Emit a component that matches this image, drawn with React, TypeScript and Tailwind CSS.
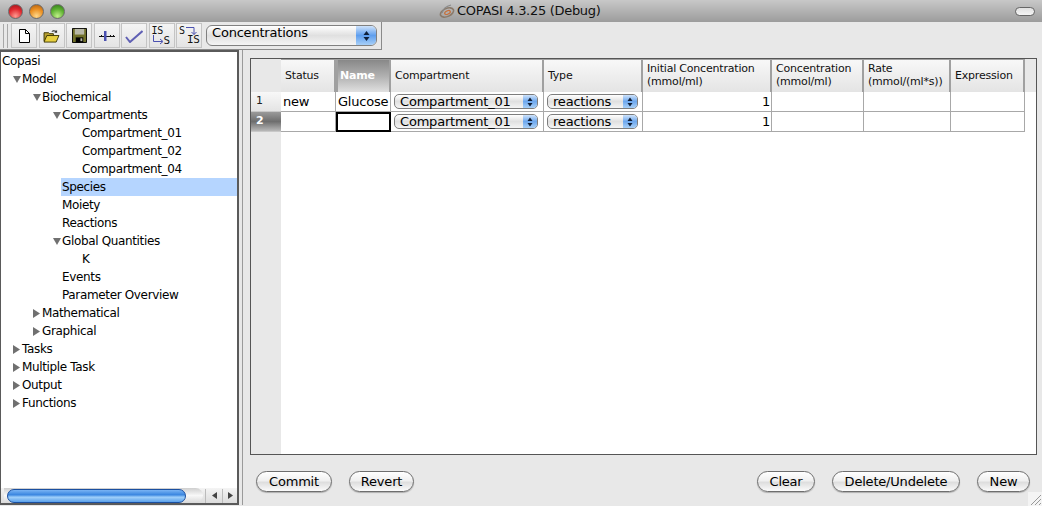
import React from "react";

function Light({ c }: { c: string }) {
  return <div className={`w-[15px] h-[15px] rounded-full border border-[#6b6b6b] ${c}`} />;
}

function ToolBtn({ children }: { children: React.ReactNode }) {
  return (
    <div className="w-[26px] h-[25px] bg-[linear-gradient(#f4f4f4,#e4e4e4)] border border-[#c4c4c4] flex items-center justify-center shrink-0">
      {children}
    </div>
  );
}

function Combo({ text, className }: { text: string; className: string }) {
  return (
    <div className={`h-[15px] rounded-[5px] border border-[#7d7d7d] bg-[linear-gradient(#ffffff,#e0e0e0_50%,#f4f4f4)] flex items-center ${className}`}>
      <span className="flex-1 pl-[5px] text-[13px] leading-[13px] pb-[1px] text-black whitespace-nowrap">{text}</span>
      <div className="w-[14px] h-full rounded-r-[4px] bg-[linear-gradient(#cfe3fb,#6ea8ee_50%,#a8d0f8)] flex items-center justify-center">
        <svg width="6" height="10" viewBox="0 0 6 10"><path d="M3 .5 5.500 4H.5zM3 9.500 .5 6h5z" fill="#10203a" /></svg>
      </div>
    </div>
  );
}

function Pill({ text, className }: { text: string; className: string }) {
  return (
    <div className={`h-[21px] rounded-full border border-[#6e6e6e] bg-[linear-gradient(#ffffff,#f0f0f0_45%,#dedede_55%,#fbfbfb)] shadow-[0_1px_1px_rgba(0,0,0,0.25)] flex items-center justify-center text-[13px] text-black ${className}`}>
      {text}
    </div>
  );
}

const tree: { label: string; indent: number; arrow?: "down" | "right"; selected?: boolean }[] = [
  { label: "Copasi", indent: 2 },
  { label: "Model", indent: 22, arrow: "down" },
  { label: "Biochemical", indent: 42, arrow: "down" },
  { label: "Compartments", indent: 62, arrow: "down" },
  { label: "Compartment_01", indent: 82 },
  { label: "Compartment_02", indent: 82 },
  { label: "Compartment_04", indent: 82 },
  { label: "Species", indent: 62, selected: true },
  { label: "Moiety", indent: 62 },
  { label: "Reactions", indent: 62 },
  { label: "Global Quantities", indent: 62, arrow: "down" },
  { label: "K", indent: 82 },
  { label: "Events", indent: 62 },
  { label: "Parameter Overview", indent: 62 },
  { label: "Mathematical", indent: 42, arrow: "right" },
  { label: "Graphical", indent: 42, arrow: "right" },
  { label: "Tasks", indent: 22, arrow: "right" },
  { label: "Multiple Task", indent: 22, arrow: "right" },
  { label: "Output", indent: 22, arrow: "right" },
  { label: "Functions", indent: 22, arrow: "right" },
];

function TreeRow({ label, indent, arrow, selected }: (typeof tree)[number]) {
  return (
    <div
      className="h-[18px] flex items-center text-[12px] tracking-[-0.35px] leading-[18px] text-black whitespace-nowrap"
      style={{ paddingLeft: selected ? 0 : indent - 1, marginLeft: selected ? indent - 2 : 0 }}
    >
      {selected ? (
        <div className="h-[18px] pl-[1px] flex-1 bg-[#b5d5ff]">{label}</div>
      ) : (
        <div className="relative">
          {arrow === "down" && (
            <svg className="absolute left-[-9px] top-[6px]" width="8" height="7" viewBox="0 0 8 7"><path d="M0 0h8L4 7z" fill="#707070" /></svg>
          )}
          {arrow === "right" && (
            <svg className="absolute left-[-9px] top-[5px]" width="7" height="9" viewBox="0 0 7 9"><path d="M0 0v9l7-4.500z" fill="#707070" /></svg>
          )}
          {label}
        </div>
      )}
    </div>
  );
}

const cols = [
  { w: "w-[55px]", h: ["Status"] },
  { w: "w-[55px]", h: ["Name"], sel: true },
  { w: "w-[153px]", h: ["Compartment"] },
  { w: "w-[99px]", h: ["Type"] },
  { w: "w-[129px]", h: ["Initial Concentration", "(mmol/ml)"] },
  { w: "w-[92px]", h: ["Concentration", "(mmol/ml)"] },
  { w: "w-[87px]", h: ["Rate", "(mmol/(ml*s))"] },
  { w: "w-[74px]", h: ["Expression"] },
];

function Row({ n, status, name, sel }: { n: number; status: string; name: string; sel?: boolean }) {
  const cell = "h-[20px] border-r border-b border-[#a8a8a8] bg-white flex items-center shrink-0 text-[13px] text-black";
  return (
    <div className="flex h-[20px]">
      <div className={`w-[30px] h-[20px] shrink-0 border-b border-[#c8c8c8] flex items-center pl-[5px] text-[11px] font-bold ${sel ? "bg-[linear-gradient(#9a9a9a,#6e6e6e_50%,#b8b8b8)] text-white" : "bg-[linear-gradient(#f8f8f8,#e4e4e4)] text-[#222] font-normal"}`}>{n}</div>
      <div className={`${cell} w-[55px] pl-[2px]`}>{status}</div>
      {sel ? (
        <div className="w-[55px] h-[20px] shrink-0 border-2 border-black bg-white" />
      ) : (
        <div className={`${cell} w-[55px] pl-[2px] whitespace-nowrap`}>{name}</div>
      )}
      <div className={`${cell} w-[153px] pl-[3px]`}><Combo text="Compartment_01" className="w-[144px]" /></div>
      <div className={`${cell} w-[99px] pl-[3px]`}><Combo text="reactions" className="w-[91px]" /></div>
      <div className={`${cell} w-[129px] justify-end pr-[1px]`}>1</div>
      <div className={`${cell} w-[92px]`} />
      <div className={`${cell} w-[87px]`} />
      <div className={`${cell} w-[74px]`} />
    </div>
  );
}

export default function App() {
  return (
    <div className="w-[1042px] h-[506px] overflow-hidden flex flex-col bg-[#e8e8e8] relative font-['DejaVu_Sans',sans-serif] tracking-[-0.2px]">
      {/* title bar */}
      <div className="h-[22px] shrink-0 flex items-center bg-[linear-gradient(#c8c8c8,#9c9c9c)] pl-[8px] pr-[7px]">
        <div className="flex gap-[6px]">
          <Light c="bg-[radial-gradient(circle_at_50%_85%,#ff9a90,#e0282e_55%,#98141a)]" />
          <Light c="bg-[radial-gradient(circle_at_50%_85%,#ffd88a,#ea8e20_55%,#a85a10)]" />
          <Light c="bg-[radial-gradient(circle_at_50%_85%,#c0f088,#5cb030_55%,#2c7416)]" />
        </div>
        <div className="ml-[373px] flex items-center gap-[1px]">
          <svg width="18" height="14" viewBox="0 0 18 14" fill="none">
            <ellipse cx="9" cy="8.500" rx="7" ry="4" stroke="#8a7a6a" strokeWidth="1.600" transform="rotate(-25 9 8.500)" />
            <ellipse cx="9.500" cy="8.500" rx="3" ry="1.600" stroke="#c8703a" strokeWidth="1.200" transform="rotate(-25 9.500 8.500)" />
            <path d="M4 9C5 5 9 2 13 1" stroke="#8a8a8a" strokeWidth="1.200" />
          </svg>
          <span className="text-[13px] tracking-[-0.3px] text-[#101010] whitespace-nowrap">COPASI 4.3.25 (Debug)</span>
        </div>
        <div className="ml-auto w-[20px] h-[9px] rounded-full border border-[#666] bg-[linear-gradient(#e0e0e0,#f4f4f4)]" />
      </div>

      {/* toolbar */}
      <div className="h-[28px] shrink-0 flex items-start">
        <div className="w-[382px] h-[28px] border-r border-b border-[#8a8a8a] bg-[#e8e8e8] flex items-center pl-[3px]">
          <div className="w-[5px] h-[24px] border-x border-[#a8a8a8] mr-[3px] shrink-0" />
          <div className="flex gap-[1.500px]">
            <ToolBtn>
              <svg width="11" height="14" viewBox="0 0 11 14"><path d="M.5.5h6l4 4v9H.5z" fill="#fff" stroke="#000" /><path d="M6.500.5v4h4" fill="none" stroke="#000" /></svg>
            </ToolBtn>
            <ToolBtn>
              <svg width="17" height="14" viewBox="0 0 18 15"><path d="M1 4h5l1 1h4v8H1z" fill="#b8a030" stroke="#3a3400" /><path d="M1 14l3-7h13l-3 7z" fill="#e8d040" stroke="#3a3400" /><path d="M9 3c1-2 3-2 5-1l1-1v3h-3l1-1c-1-.5-2-.5-3 0" fill="#333" /></svg>
            </ToolBtn>
            <ToolBtn>
              <svg width="15" height="15" viewBox="0 0 16 16"><path d="M.5.5h15v15H.5z" fill="#70702a" stroke="#000" /><path d="M3 1h10v6H3z" fill="#b8b8a8" /><path d="M4 10h8v5.500H4z" fill="#000" /><path d="M9 11h2v3H9z" fill="#b8b8a8" /></svg>
            </ToolBtn>
            <ToolBtn>
              <svg width="18" height="12" viewBox="0 0 18 12"><path d="M1 6.500h16M3.500 5v2M12.500 5v2M15.500 5v2" stroke="#111" fill="none" /><rect x="6" y="1" width="2.500" height="10" fill="#4a50b0" /></svg>
            </ToolBtn>
            <ToolBtn>
              <svg width="18" height="15" viewBox="0 0 18 15"><path d="M1 9l4 5L17.500 3" stroke="#6060b4" strokeWidth="2" fill="none" /></svg>
            </ToolBtn>
            <ToolBtn>
              <div className="w-[20px] h-[19px] flex flex-col font-['DejaVu_Sans_Mono',monospace] text-[10px] leading-[9px] text-[#111] tracking-[-0.3px]">
                <span>IS</span>
                <div className="flex items-center text-[11px]">
                  <svg className="shrink-0" width="12" height="10" viewBox="0 0 12 10"><path d="M1.500 0v6.500H10M8 4l3 2.500L8 9" stroke="#4a50b0" fill="none" /></svg>
                  <span>S</span>
                </div>
              </div>
            </ToolBtn>
            <ToolBtn>
              <div className="w-[20px] h-[19px] flex flex-col font-['DejaVu_Sans_Mono',monospace] text-[10px] leading-[9px] text-[#111] tracking-[-0.3px]">
                <div className="flex items-center">
                  <span>S</span>
                  <svg className="shrink-0" width="13" height="9" viewBox="0 0 13 9"><path d="M1 1.500h8v7M6.500 6l2.500 2.500L11.500 6" stroke="#4a50b0" fill="none" /></svg>
                </div>
                <span className="pl-[8px] text-[11px]">IS</span>
              </div>
            </ToolBtn>
          </div>
          <div className="ml-[4px] w-[171px] h-[21px] rounded-[6px] border border-[#808080] bg-[linear-gradient(#ffffff,#e0e0e0_50%,#f4f4f4)] flex items-center overflow-hidden">
            <span className="flex-1 pl-[5px] text-[13px] text-black pb-[5px]">Concentrations</span>
            <div className="w-[20px] h-full bg-[linear-gradient(#cfe3fb,#5e9eee_50%,#a8d0f8)] flex items-center justify-center">
              <svg width="7" height="12" viewBox="0 0 7 12"><path d="M3.500 1 6.500 5H.5zM3.500 11 .5 7h6z" fill="#10203a" /></svg>
            </div>
          </div>
        </div>
      </div>

      {/* main */}
      <div className="flex-1 flex min-h-0 pb-[1px]">
        <div className="w-[239px] shrink-0 border-t-2 border-r-2 border-b-2 border-l border-[#5a5a5a] bg-white flex flex-col">
          <div className="flex-1 min-h-0 overflow-hidden">
            {tree.map((t) => (
              <TreeRow key={t.label} {...t} />
            ))}
          </div>
          <div className="h-[15px] shrink-0 flex items-center bg-[linear-gradient(#f4f4f4,#dcdcdc)]">
            <div className="ml-[3px] w-[199px] h-[15px] rounded-r-full bg-[linear-gradient(#cfcfcf,#f8f8f8_50%,#d8d8d8)] shrink-0 flex items-center">
              <div className="ml-[3px] w-[179px] h-[14px] rounded-full border border-[#1a4fa0] bg-[linear-gradient(#7ab4f4,#3a86e0_40%,#a0d0fa_60%,#5aa0ea)] shrink-0" />
            </div>
            <div className="ml-auto flex items-center">
              <div className="w-[17px] h-[14px] flex items-center justify-center border-l border-[#bbb]">
                <svg width="5" height="7" viewBox="0 0 5 7"><path d="M5 0v7L0 3.500z" fill="#444" /></svg>
              </div>
              <div className="w-[15px] h-[14px] flex items-center justify-center border-l border-[#bbb]">
                <svg width="5" height="7" viewBox="0 0 5 7"><path d="M0 0v7l5-3.500z" fill="#444" /></svg>
              </div>
            </div>
          </div>
        </div>

        <div className="flex-1 min-w-0 flex flex-col pl-[3px]">
          <div className="flex-1 flex flex-col pl-[7px] pr-[5px] pt-[8px] border-l border-[#9a9a9a]">
            {/* table */}
            <div className="h-[397px] border border-[#555] bg-white flex flex-col">
              <div className="flex h-[33px] shrink-0 bg-[#e8e8e8]">
                <div className="w-[30px] shrink-0 bg-[#e8e8e8]" />
                {cols.map((c) => (
                  <div
                    key={c.h[0]}
                    className={`${c.w} shrink-0 border-r-2 border-t border-[#a0a0a0] flex flex-col justify-center pb-[2px] text-[11px] leading-[13px] whitespace-nowrap ${c.sel ? "pl-[2px] bg-[linear-gradient(#888,#b0b0b0_50%,#e0e0e0)] text-white font-bold border-l-2" : "pl-[4px] bg-[linear-gradient(#f8f8f8,#e4e4e4)] text-[#111]"}`}
                  >
                    {c.h.map((l) => (
                      <span key={l}>{l}</span>
                    ))}
                  </div>
                ))}
              </div>
              <Row n={1} status="new" name="Glucose" />
              <Row n={2} status="" name="" sel />
              <div className="flex-1 flex">
                <div className="w-[30px] bg-[#e8e8e8]" />
              </div>
            </div>

            {/* buttons */}
            <div className="flex-1 flex items-start pt-[16px] pl-[6px]">
              <Pill text="Commit" className="w-[76px]" />
              <Pill text="Revert" className="w-[65px] ml-[17px]" />
              <Pill text="Clear" className="w-[58px] ml-auto" />
              <Pill text="Delete/Undelete" className="w-[128px] ml-[17px]" />
              <Pill text="New" className="w-[53px] ml-[17px] mr-[7px]" />
            </div>
          </div>
        </div>
      </div>

      <svg className="absolute right-0 bottom-0" width="14" height="14" viewBox="0 0 14 14">
        <rect width="14" height="14" fill="#f4f4f4" />
        <path d="M3 13 13 3M7 13l6-6M11 13l2-2" stroke="#999" />
      </svg>
    </div>
  );
}
